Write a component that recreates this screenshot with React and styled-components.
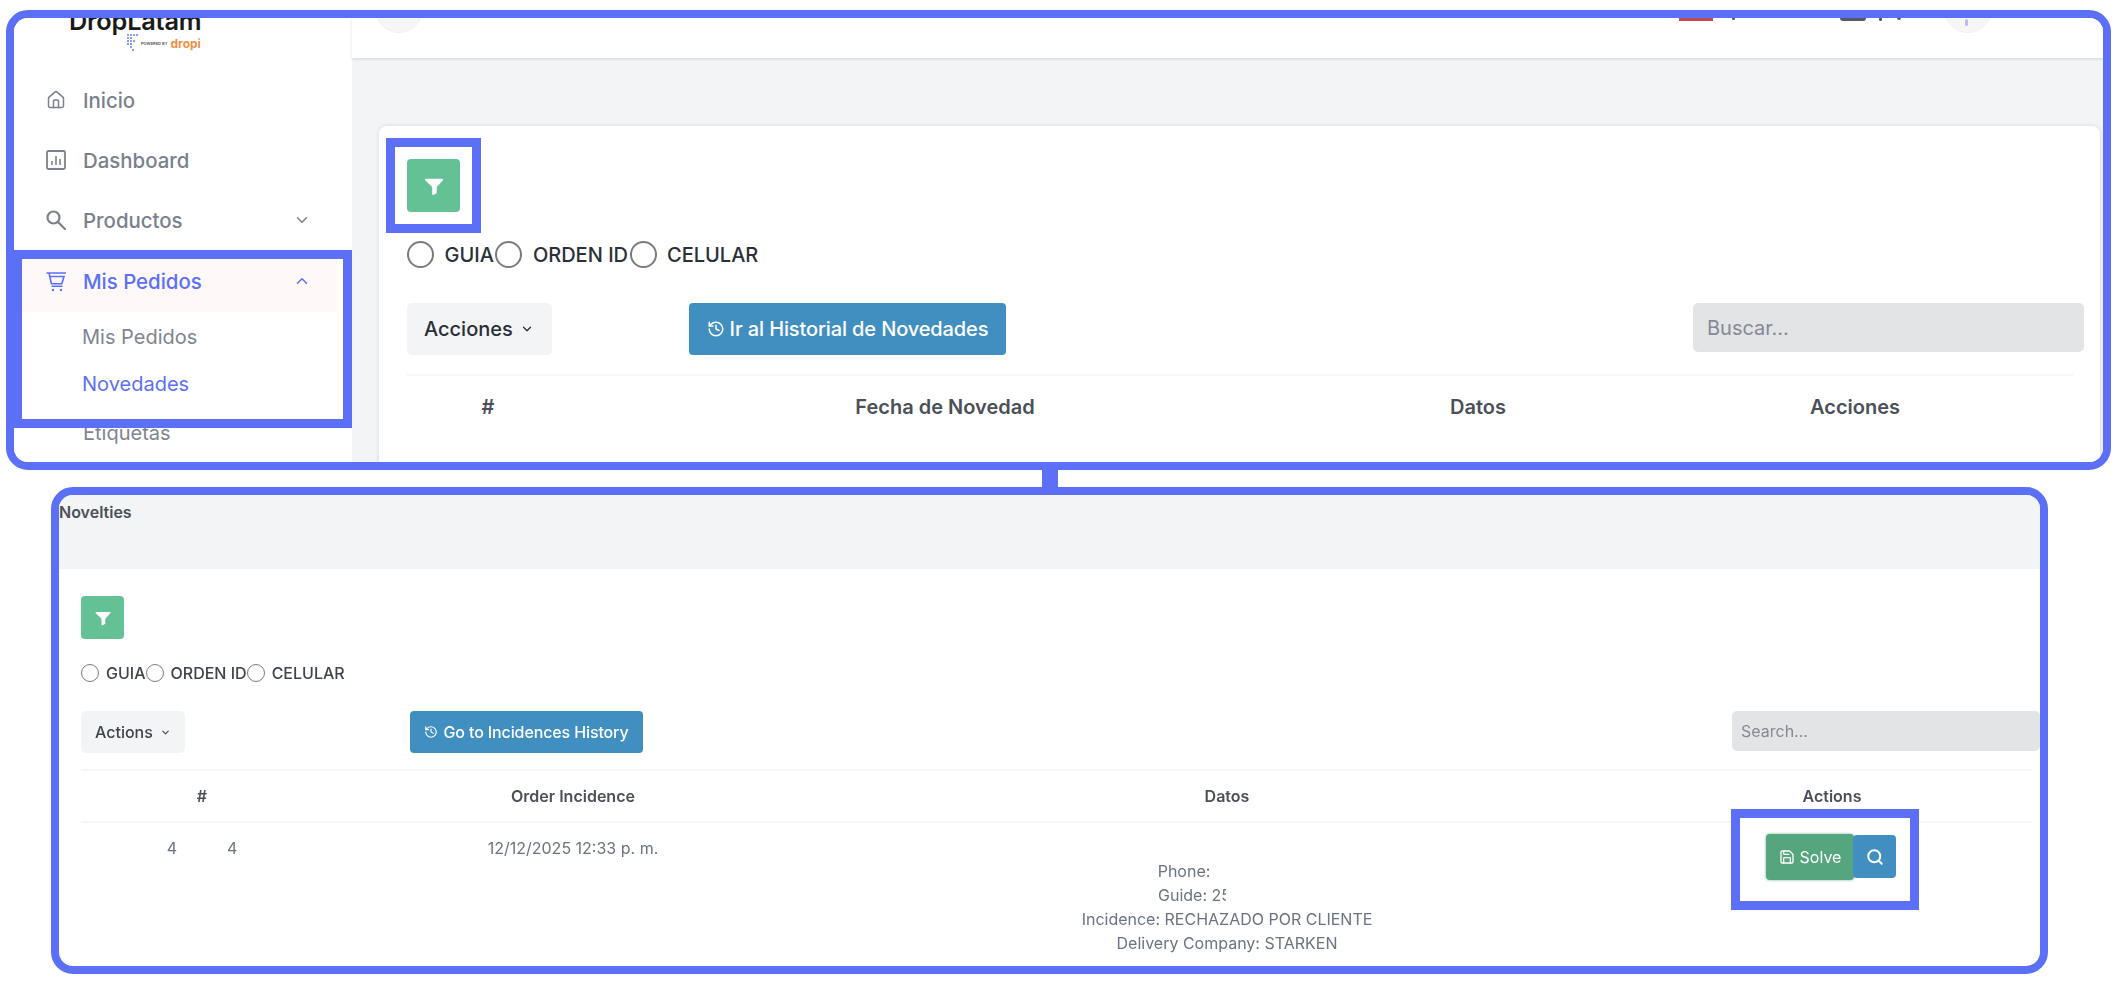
import React from "react";
import styled, { createGlobalStyle } from "styled-components";
import { ChevronDown, ChevronUp, History, House, Save, Search } from "lucide-react";

const BLUE = "#5b70f6";

const GlobalStyle = createGlobalStyle`
  html, body {
    margin: 0;
    background: #fff;
    font-family: Inter, "Liberation Sans", sans-serif;
  }
  * { box-sizing: border-box; }
`;

const Page = styled.div`
  width: 2118px;
  height: 986px;
  padding: 10px 0 0 6px;
  overflow: hidden;
`;

const Frame = styled.section`
  border: 8px solid ${BLUE};
  border-radius: 22px;
  overflow: hidden;
  background: #fff;
`;

const TopFrame = styled(Frame)`
  display: flex;
  width: 2105px;
  height: 460px;
  --text: 20px;
  --ink: #2a2f38;
  --radio: 27px;
  --radio-border: 2px;
  --radio-gap: 10.5px;
  --label-gap: 1.5px;
  --field-h: 49px;
  --button-h: 52px;
  --button-pad: 17px;
`;

const BottomFrame = styled(Frame)`
  width: 1997px;
  height: 487px;
  margin-left: 45px;
  --text: 16px;
  --ink: #3f444c;
  --radio: 18px;
  --radio-border: 1.5px;
  --radio-gap: 7px;
  --label-gap: 0px;
  --field-h: 40px;
  --button-h: 42px;
  --button-pad: 14px;
`;

const Connector = styled.div`
  width: 16px;
  height: 17px;
  margin-left: 1036px;
  background: ${BLUE};
`;

/* sidebar */
const Sidebar = styled.aside`
  width: 338px;
  flex: none;
  background: #fff;
`;

const Logo = styled.div`
  height: 65px;
  margin-top: -13px;
  padding-left: 55px;
`;

const LogoName = styled.div`
  font-size: 25.3px;
  line-height: 32px;
  font-weight: 600;
  letter-spacing: -0.2px;
  color: #1a1a1a;
`;

const LogoSub = styled.div`
  display: flex;
  align-items: center;
  height: 18px;
  margin: -3px 0 0 58px;
`;

const PoweredBy = styled.span`
  margin: 0 3px 0 3px;
  font-size: 4px;
  font-weight: 600;
  color: #555;
  white-space: nowrap;
`;

const Dropi = styled.span`
  font-size: 12px;
  font-weight: 700;
  color: #ee8f45;
`;

const NavItem = styled.div`
  display: flex;
  align-items: center;
  height: 60px;
  padding-left: 32px;
  gap: 17px;
  font-size: 20.4px;
  font-weight: 500;
  color: #7a808c;
  svg { flex: none; }
`;

const NavLabel = styled.span`
  flex: 1;
`;

const NavChevron = styled.span`
  display: flex;
  margin-right: ${(p) => p.$right}px;
`;

const Highlight = styled.div`
  position: relative;
  z-index: 1;
  border: 9px solid ${BLUE};
  background: transparent;
`;

const OrdersGroup = styled(Highlight)`
  margin-left: -1px;
  height: 178px;
`;

const ActiveItem = styled.div`
  display: flex;
  align-items: center;
  height: 53px;
  margin: 0 6px 1px 0;
  padding: 0 0 9px 24px;
  gap: 16px;
  background: #fef8f8;
  font-size: 20.4px;
  font-weight: 500;
  color: ${BLUE};
  svg { flex: none; }
`;

const SubItem = styled.div`
  display: flex;
  align-items: center;
  height: 47px;
  padding-left: ${(p) => p.$pad || 60}px;
  font-size: 20px;
  font-weight: 400;
  color: ${(p) => (p.$active ? BLUE : "#7f8490")};
`;

const EtiquetasItem = styled(SubItem)`
  margin-top: -19px;
`;

/* main area of the first shot */
const Main = styled.main`
  flex: 1;
  min-width: 0;
  background: #f3f4f6;
`;

const TopBar = styled.header`
  display: flex;
  align-items: flex-start;
  height: 40px;
  overflow: hidden;
  padding: 0 0 0 23px;
  background: #fff;
  box-shadow: 0 1px 3px rgba(40, 50, 70, 0.16);
`;

const RoundButton = styled.div`
  position: relative;
  flex: none;
  width: 48px;
  height: 48px;
  margin: -33px 0 0 ${(p) => p.$left || 0}px;
  border-radius: 50%;
  background: #f6f6f7;
  border: 1px solid #f0f0f2;
`;

const Flag = styled.div`
  flex: none;
  width: 34px;
  height: 3px;
  margin-left: 1256px;
  background: #c24a50;
`;

const Peek = styled.div`
  flex: none;
  width: ${(p) => p.$w}px;
  height: ${(p) => p.$h}px;
  margin-left: ${(p) => p.$left}px;
  background: #555a66;
  border-radius: 0 0 4px 4px;
`;

const AvatarMark = styled.div`
  position: absolute;
  left: 20px;
  top: 33px;
  width: 3px;
  height: 7px;
  background: #b4bef8;
  border-radius: 2px;
`;

const Card = styled.div`
  margin: 68px 3px 0 27px;
  height: 340px;
  padding: 12px 16px 0 28px;
  background: #fff;
  border-radius: 8px 8px 0 0;
  box-shadow: 0 0 4px rgba(40, 50, 70, 0.14);
`;

const FilterHighlight = styled(Highlight)`
  width: 95px;
  margin-left: -21px;
  padding: 12px;
`;

const FilterButton = styled.button`
  display: flex;
  align-items: center;
  justify-content: center;
  width: ${(p) => p.$size}px;
  height: ${(p) => p.$size}px;
  padding: 0;
  border: 0;
  border-radius: 4px;
  background: #64c195;
`;

const RadioRow = styled.div`
  display: flex;
  align-items: center;
  margin-top: ${(p) => p.$top}px;
  font-size: var(--text);
  font-weight: 500;
  color: var(--ink);
`;

const RadioOption = styled.label`
  display: flex;
  align-items: center;
  gap: var(--radio-gap);
  margin-right: var(--label-gap);
`;

const Radio = styled.input.attrs({ type: "radio" })`
  appearance: none;
  width: var(--radio);
  height: var(--radio);
  margin: 0;
  border: var(--radio-border) solid #7b7b7b;
  border-radius: 50%;
  background: #fff;
`;

const Toolbar = styled.div`
  display: flex;
  align-items: flex-start;
  margin-top: ${(p) => p.$top}px;
`;

const ActionsButton = styled.button`
  display: flex;
  align-items: center;
  gap: 7px;
  width: ${(p) => p.$w}px;
  height: var(--button-h);
  padding: 0 0 0 var(--button-pad);
  border: 0;
  border-radius: 5px;
  background: #f3f4f6;
  font: 500 var(--text) Inter, sans-serif;
  color: var(--ink);
`;

const HistoryButton = styled.button`
  display: flex;
  align-items: center;
  justify-content: center;
  gap: 5px;
  width: ${(p) => p.$w}px;
  height: var(--button-h);
  margin-left: ${(p) => p.$left}px;
  padding: 0;
  border: 0;
  border-radius: 4px;
  background: #418fc1;
  font: 500 var(--text) Inter, sans-serif;
  letter-spacing: -0.12px;
  color: #fff;
`;

const SearchField = styled.input`
  width: ${(p) => p.$w}px;
  height: var(--field-h);
  margin-left: auto;
  padding: 0 ${(p) => p.$pad}px;
  border: 0;
  border-radius: 5px;
  background: #e3e4e6;
  font: 400 var(--text) Inter, sans-serif;
  &::placeholder { color: #858994; opacity: 1; }
`;

const TableRow = styled.div`
  display: grid;
  grid-template-columns: ${(p) => p.$cols};
  width: ${(p) => p.$w}px;
  margin-top: ${(p) => p.$top || 0}px;
  border-top: 2px solid #f5f5f6;
`;

const HeadCell = styled.div`
  height: ${(p) => p.$h}px;
  display: flex;
  align-items: center;
  justify-content: center;
  font-size: var(--text);
  font-weight: 600;
  color: #4b5058;
`;

const BodyCell = styled.div`
  display: flex;
  justify-content: center;
  align-items: flex-start;
  gap: ${(p) => p.$gap || 0}px;
  padding-top: ${(p) => p.$top || 0}px;
  font-size: 16px;
  line-height: 24px;
  color: #6b7280;
`;

const DataLines = styled.div`
  padding-top: 36px;
  font-size: 16px;
  line-height: 24px;
  text-align: center;
  color: #6b7280;
`;

const Masked = styled.span`
  display: inline-block;
  vertical-align: bottom;
  width: ${(p) => p.$w}px;
  height: 24px;
  overflow: hidden;
  white-space: pre;
`;

/* second shot */
const NoveltiesHeader = styled.div`
  height: 74px;
  padding-top: 7px;
  background: #f3f4f6;
  font-size: 16px;
  line-height: 20px;
  font-weight: 600;
  color: #4b5058;
`;

const NoveltiesBody = styled.div`
  padding: 27px 0 0 22px;
  filter: blur(0.35px);
`;

const SolveHighlight = styled(Highlight)`
  display: flex;
  align-items: flex-start;
  width: 188px;
  height: 101px;
  margin: -14px 0 0 100px;
  padding: 16px 0 0 26px;
  background: #fff;
`;

const SolveButton = styled.button`
  display: flex;
  align-items: center;
  justify-content: center;
  gap: 5px;
  width: 88px;
  height: 46px;
  padding: 0;
  border: 0;
  border-radius: 4px;
  background: #55a57e;
  box-shadow: 0 0 3px rgba(85, 165, 126, 0.8);
  font: 400 16px Inter, sans-serif;
  color: #fff;
`;

const ViewButton = styled.button`
  display: flex;
  align-items: center;
  justify-content: center;
  width: 43px;
  height: 43px;
  margin: 1px 0 0 -1px;
  padding: 0;
  border: 0;
  border-radius: 4px;
  background: #418fc1;
  color: #fff;
`;

const FunnelIcon = ({ size }) => (
  <svg width={size} height={size} viewBox="0 0 24 24" fill="#fff">
    <path d="M3 4h18c.8 0 1.2 1 .7 1.6L15 13v6.2c0 .4-.2.7-.5.9l-3 1.5c-.7.3-1.5-.2-1.5-1V13L2.3 5.600C1.800 5 2.200 4 3 4z" />
  </svg>
);

const ChartIcon = () => (
  <svg width="20" height="20" viewBox="0 0 20 20" fill="none" stroke="currentColor">
    <rect x="1" y="1" width="18" height="18" rx="1.5" strokeWidth="1.8" />
    <path d="M6 15v-4M10 15V6M14 15V9" strokeWidth="1.6" />
  </svg>
);

const LensIcon = () => (
  <svg width="20" height="20" viewBox="0 0 20 20" fill="none" stroke="currentColor" strokeWidth="2.2">
    <circle cx="7.500" cy="7.500" r="6" />
    <path d="M12 12l7 7" strokeLinecap="round" />
  </svg>
);

const CartIcon = () => (
  <svg width="21" height="21" viewBox="0 0 21 21" fill="none" stroke="currentColor" strokeWidth="1.6">
    <path d="M0.500 2h19.500M3 2l2.400 10.700h10.400L18 5.500H4" />
    <path d="M5.500 15.200h11" />
    <circle cx="7" cy="19" r="1.200" fill="currentColor" stroke="none" />
    <circle cx="15" cy="19" r="1.200" fill="currentColor" stroke="none" />
  </svg>
);

const DropiMark = () => (
  <svg width="11" height="18" viewBox="0 0 11 18" fill="#6a7cf0">
    {[
      [1, 1], [4, 1], [7, 1], [10, 1],
      [1, 4], [4, 4],
      [1, 7], [4, 7], [7, 7],
      [1, 10], [4, 10],
      [4, 13],
      [6, 16],
    ].map(([cx, cy]) => (
      <circle key={`${cx}-${cy}`} cx={cx} cy={cy} r="1" />
    ))}
  </svg>
);

const RadioGroup = ({ top }) => (
  <RadioRow $top={top}>
    <RadioOption><Radio name={`by-${top}`} />GUIA</RadioOption>
    <RadioOption><Radio name={`by-${top}`} />ORDEN ID</RadioOption>
    <RadioOption><Radio name={`by-${top}`} />CELULAR</RadioOption>
  </RadioRow>
);

const TOP_COLS = "162px 752px 314px 440px";
const BOTTOM_COLS = "242px 500px 808px 402px";

export default function App() {
  return (
    <Page>
      <GlobalStyle />
      <TopFrame>
        <Sidebar>
          <Logo>
            <LogoName>DropLatam</LogoName>
            <LogoSub>
              <DropiMark />
              <PoweredBy>POWERED BY</PoweredBy>
              <Dropi>dropi</Dropi>
            </LogoSub>
          </Logo>
          <NavItem>
            <House size={20} strokeWidth={1.8} />
            <NavLabel>Inicio</NavLabel>
          </NavItem>
          <NavItem>
            <ChartIcon />
            <NavLabel>Dashboard</NavLabel>
          </NavItem>
          <NavItem>
            <LensIcon />
            <NavLabel>Productos</NavLabel>
            <NavChevron $right={41}><ChevronDown size={18} strokeWidth={2} /></NavChevron>
          </NavItem>
          <OrdersGroup>
            <ActiveItem>
              <CartIcon />
              <NavLabel>Mis Pedidos</NavLabel>
              <NavChevron $right={26}><ChevronUp size={18} strokeWidth={2} /></NavChevron>
            </ActiveItem>
            <SubItem>Mis Pedidos</SubItem>
            <SubItem $active>Novedades</SubItem>
          </OrdersGroup>
          <EtiquetasItem $pad={69}>Etiquetas</EtiquetasItem>
        </Sidebar>
        <Main>
          <TopBar>
            <RoundButton />
            <Flag />
            <Peek $w={3} $h={2} $left={19} />
            <Peek $w={26} $h={3} $left={105} />
            <Peek $w={3} $h={3} $left={13} />
            <Peek $w={4} $h={2} $left={15} />
            <RoundButton $left={43}><AvatarMark /></RoundButton>
          </TopBar>
          <Card>
            <FilterHighlight>
              <FilterButton $size={53}><FunnelIcon size={22} /></FilterButton>
            </FilterHighlight>
            <RadioGroup top={8} />
            <Toolbar $top={35}>
              <ActionsButton $w={145}>Acciones <ChevronDown size={14} strokeWidth={2.2} /></ActionsButton>
              <HistoryButton $w={317} $left={137}><History size={18} strokeWidth={2} />Ir al Historial de Novedades</HistoryButton>
              <SearchField $w={391} $pad={14} placeholder="Buscar..." />
            </Toolbar>
            <TableRow $cols={TOP_COLS} $w={1666} $top={19}>
              <HeadCell $h={62}>#</HeadCell>
              <HeadCell $h={62}>Fecha de Novedad</HeadCell>
              <HeadCell $h={62}>Datos</HeadCell>
              <HeadCell $h={62}>Acciones</HeadCell>
            </TableRow>
          </Card>
        </Main>
      </TopFrame>
      <Connector />
      <BottomFrame>
        <NoveltiesHeader>Novelties</NoveltiesHeader>
        <NoveltiesBody>
          <FilterButton $size={43}><FunnelIcon size={18} /></FilterButton>
          <RadioGroup top={24} />
          <Toolbar $top={28}>
            <ActionsButton $w={104}>Actions <ChevronDown size={11} strokeWidth={2.4} /></ActionsButton>
            <HistoryButton $w={233} $left={225}><History size={14} strokeWidth={2} />Go to Incidences History</HistoryButton>
            <SearchField $w={308} $pad={9} placeholder="Search..." />
          </Toolbar>
          <TableRow $cols={BOTTOM_COLS} $w={1951} $top={16}>
            <HeadCell $h={50}>#</HeadCell>
            <HeadCell $h={50}>Order Incidence</HeadCell>
            <HeadCell $h={50}>Datos</HeadCell>
            <HeadCell $h={50}>Actions</HeadCell>
          </TableRow>
          <TableRow $cols={BOTTOM_COLS} $w={1951}>
            <BodyCell $top={13} $gap={50}><span>4</span><span>4</span></BodyCell>
            <BodyCell $top={13}>12/12/2025 12:33 p. m.</BodyCell>
            <DataLines>
              <div>Phone:<Masked $w={86} /></div>
              <div><Masked $w={68}>Guide: 25</Masked><Masked $w={70} /></div>
              <div>Incidence: RECHAZADO POR CLIENTE</div>
              <div>Delivery Company: STARKEN</div>
            </DataLines>
            <SolveHighlight>
              <SolveButton><Save size={16} strokeWidth={2} />Solve</SolveButton>
              <ViewButton><Search size={18} strokeWidth={2.6} /></ViewButton>
            </SolveHighlight>
          </TableRow>
        </NoveltiesBody>
      </BottomFrame>
    </Page>
  );
}
